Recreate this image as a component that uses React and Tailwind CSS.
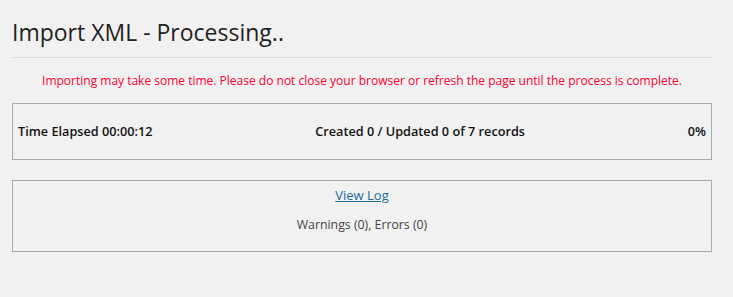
import React from 'react'

const App = () => {
    return (
        <div className="min-h-[297px] bg-[#f1f1f1] pl-3 pr-[21px] pt-[14px] text-[#222] font-['Open_Sans',sans-serif]">
            {/* HEADER */}
            <h1 className="text-[23px] leading-[36px] font-normal text-[#222]">
                Import XML - Processing..
            </h1>
            <div className="mt-[7px] border-t border-[#dcdcdc]" />

            <p className="mt-[15px] text-center text-[12px] leading-[16px] text-[#ff0033]">
                Importing may take some time. Please do not close your browser or refresh the page until the process is complete.
            </p>

            {/* PROGRESS */}
            <div className="mt-[14px] flex h-[57px] items-center justify-between border border-[#a9a9a9] px-[5px] text-[12.7px] font-semibold text-[#111]">
                <span>Time Elapsed 00:00:12</span>
                <span>Created 0 / Updated 0 of 7 records</span>
                <span>0%</span>
            </div>

            {/* LOG */}
            <div className="mt-[20px] flex h-[72px] flex-col items-center border border-[#a9a9a9] pt-[5px]">
                <a href="#" className="text-[13px] text-[#1a6a9a] underline">View Log</a>
                <p className="mt-[10px] text-[12.3px] text-[#444]">Warnings (0), Errors (0)</p>
            </div>
        </div>
    );
};

export default App;
